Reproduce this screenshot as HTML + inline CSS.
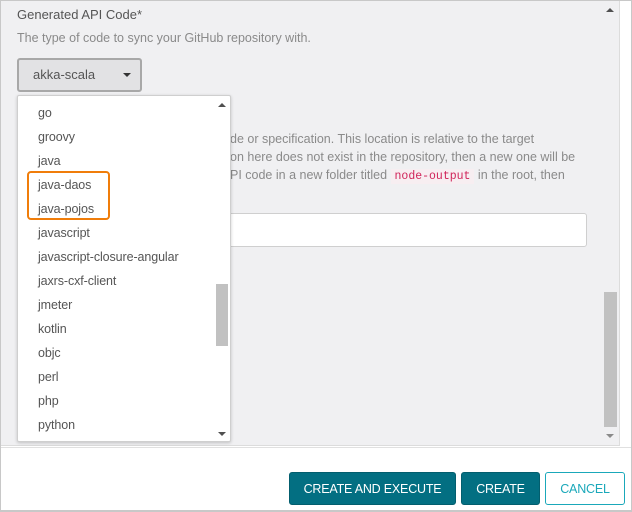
<!DOCTYPE html>
<html><head><style>
*{box-sizing:border-box;margin:0;padding:0}
body{width:632px;height:512px;background:#fff;font-family:"Liberation Sans",sans-serif;position:relative;overflow:hidden}
.abs{position:absolute}
.frame{left:0;top:0;width:632px;height:512px;border:1px solid #c8c8c8;border-bottom:2px solid #c8c8c8}
.gray{left:1px;top:1px;width:619px;height:445px;background:#f0f0f2;border-right:1px solid #dcdcdc;border-bottom:1px solid #dcdcdc}
.t{font-size:13px;white-space:nowrap}
.item{position:absolute;left:20px;font-size:12.5px;color:#555;letter-spacing:-0.1px}
.btn{position:absolute;top:472px;height:33px;border-radius:3px;font-size:12.5px;display:flex;align-items:center;justify-content:center;letter-spacing:-0.2px}
.tri-up{width:0;height:0;border-left:4px solid transparent;border-right:4px solid transparent;border-bottom:4px solid #505050}
.tri-dn{width:0;height:0;border-left:4px solid transparent;border-right:4px solid transparent;border-top:4px solid #505050}
</style></head><body>
<div class="abs gray"></div>
<div class="abs t" style="left:17px;top:7px;color:#555">Generated API Code*</div>
<div class="abs t" style="left:17px;top:31px;color:#8a8a8a;font-size:12.5px">The type of code to sync your GitHub repository with.</div>
<div class="abs" style="left:17px;top:58px;width:125px;height:34px;background:#e2e2e4;border:2px solid #a8a8a8;border-radius:3px"></div>
<div class="abs t" style="left:33px;top:67px;color:#555">akka-scala</div>
<div class="abs tri-dn" style="left:123px;top:73px;border-top-color:#333"></div>
<div class="abs t" style="left:230px;top:132px;color:#8a8a8a;font-size:12.5px">de or specification. This location is relative to the target</div>
<div class="abs t" style="left:230px;top:150px;color:#8a8a8a;font-size:12.5px">on here does not exist in the repository, then a new one will be</div>
<div class="abs t" style="left:230px;top:168px;color:#8a8a8a;font-size:12.5px">PI code in a new folder titled <span style="font-family:'Liberation Mono',monospace;color:#d0245a;background:#f7eef1;padding:1px 4px;font-size:11.5px">node-output</span> in the root, then</div>
<div class="abs" style="left:200px;top:213px;width:387px;height:34px;background:#fff;border:1px solid #cfcfcf;border-radius:3px"></div>
<div class="abs" style="left:17px;top:130px;width:1px;height:150px;background:#bbb"></div>
<div class="abs" style="left:17px;top:275px;width:2px;height:12px;background:#777"></div>
<div class="abs" style="left:604px;top:292px;width:13px;height:135px;background:#c1c1c1"></div>
<div class="abs tri-up" style="left:606px;top:8px"></div>
<div class="abs tri-dn" style="left:606px;top:434px;border-top-color:#8a8a8a"></div>
<div class="abs" style="left:17px;top:95px;width:214px;height:347px;background:#fff;border:1px solid #cfcfcf;border-radius:2px;box-shadow:0 1px 3px rgba(0,0,0,.2)">
<div class="item" style="top:10px">go</div>
<div class="item" style="top:34px">groovy</div>
<div class="item" style="top:58px">java</div>
<div class="item" style="top:82px">java-daos</div>
<div class="item" style="top:106px">java-pojos</div>
<div class="item" style="top:130px">javascript</div>
<div class="item" style="top:154px">javascript-closure-angular</div>
<div class="item" style="top:178px">jaxrs-cxf-client</div>
<div class="item" style="top:202px">jmeter</div>
<div class="item" style="top:226px">kotlin</div>
<div class="item" style="top:250px">objc</div>
<div class="item" style="top:274px">perl</div>
<div class="item" style="top:298px">php</div>
<div class="item" style="top:322px">python</div>
<div class="abs" style="left:198px;top:188px;width:12px;height:62px;background:#c1c1c1"></div>
<div class="abs tri-up" style="left:200px;top:7px"></div>
<div class="abs tri-dn" style="left:200px;top:336px"></div>
</div>
<div class="abs" style="left:27px;top:171px;width:83px;height:49px;border:2px solid #f07d0a;border-radius:4px"></div>
<div class="abs" style="left:1px;top:447px;width:630px;height:1px;background:#e0e0e0"></div>
<div class="btn" style="left:289px;width:167px;background:#036f82;color:#fff;border:1px solid #035e6e">CREATE AND EXECUTE</div>
<div class="btn" style="left:461px;width:79px;background:#036f82;color:#fff;border:1px solid #035e6e">CREATE</div>
<div class="btn" style="left:545px;width:80px;background:#fff;color:#1aa8ba;border:1px solid #1aa8ba">CANCEL</div>
<div class="abs frame"></div>
</body></html>
